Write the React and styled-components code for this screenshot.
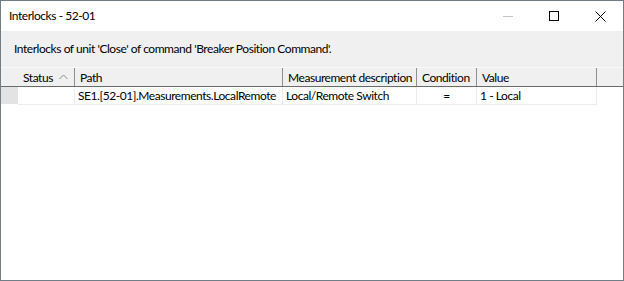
import React from "react";
import styled, { createGlobalStyle } from "styled-components";

const GlobalStyle = createGlobalStyle`
    html, body {
        margin: 0;
        padding: 0;
        background: #ffffff;
    }
    * {
        box-sizing: border-box;
    }
`

const Window = styled.div`
    width: 624px;
    height: 281px;
    border: 1px solid #6f7e87;
    background: #ffffff;
    display: flex;
    flex-direction: column;
    font-family: "Lato", "Liberation Sans", sans-serif;
    font-size: 12px;
    letter-spacing: -0.45px;
    color: #000000;
    overflow: hidden;
`
const TitleBar = styled.div`
    height: 30px;
    display: flex;
    align-items: center;
    padding-left: 8px;
`
const Title = styled.div`
    flex: 1;
    padding-bottom: 1px;
`
const CaptionButton = styled.div`
    width: 46px;
    height: 30px;
    display: flex;
    align-items: center;
    justify-content: center;
`
const Message = styled.div`
    height: 36px;
    background: #f0f0f0;
    display: flex;
    align-items: center;
    padding-left: 13px;
    padding-bottom: 1px;
`
const Grid = styled.div`
    flex: 1;
    display: flex;
    flex-direction: column;
`
const HeaderRow = styled.div`
    display: flex;
    height: 20px;
    background: #f0f0f0;
    border-top: 1px solid #f8f8f8;
    border-bottom: 1px solid #6b6b6b;
`
const HeaderCell = styled.div`
    width: ${p => p.$w}px;
    flex: ${p => (p.$fill ? 1 : "none")};
    display: flex;
    align-items: center;
    justify-content: space-between;
    padding: 0 6px 0 5px;
    border-right: ${p => (p.$sep ? "1px solid #8f8f8f" : "none")};
    white-space: nowrap;
`
const DataRow = styled.div`
    display: flex;
    height: 18px;
`
const RowHeader = styled.div`
    width: 17px;
    background: #e3e3e3;
    border-bottom: 1px solid #ffffff;
`
const Cell = styled.div`
    width: ${p => p.$w}px;
    display: flex;
    align-items: center;
    justify-content: ${p => (p.$center ? "center" : "flex-start")};
    padding-left: ${p => (p.$center ? 0 : 3)}px;
    border-right: 1px solid #ececec;
    border-bottom: 1px solid #ececec;
    white-space: nowrap;
    overflow: hidden;
`

const columns = [
    { key: "status", label: "Status", w: 57, sort: true },
    { key: "path", label: "Path", w: 208 },
    { key: "desc", label: "Measurement description", w: 134 },
    { key: "cond", label: "Condition", w: 60 },
    { key: "value", label: "Value", w: 120 },
];

const rows = [
    { status: "", path: "SE1.[52-01].Measurements.LocalRemote", desc: "Local/Remote Switch", cond: "=", value: "1 - Local" },
];

function SortArrow() {
    return (
        <svg width="9" height="6" viewBox="0 0 9 6">
            <path d="M0.5 5 L4.5 1 L8.5 5" fill="none" stroke="#8a8a8a" strokeWidth="1" />
        </svg>
    );
}

export default function App() {
    return (
        <>
            <GlobalStyle />
            <Window>
                <TitleBar>
                    <Title>Interlocks - 52-01</Title>
                    <CaptionButton>
                        <svg width="10" height="10" viewBox="0 0 10 10">
                            <line x1="0" y1="5.5" x2="10" y2="5.5" stroke="#c4c4c4" strokeWidth="1" />
                        </svg>
                    </CaptionButton>
                    <CaptionButton>
                        <svg width="10" height="10" viewBox="0 0 10 10">
                            <rect x="0.5" y="0.5" width="9" height="9" fill="none" stroke="#000" strokeWidth="1" />
                        </svg>
                    </CaptionButton>
                    <CaptionButton>
                        <svg width="11" height="11" viewBox="0 0 11 11">
                            <path d="M0.5 0.5 L10.5 10.5 M10.5 0.5 L0.5 10.5" stroke="#000" strokeWidth="1" />
                        </svg>
                    </CaptionButton>
                </TitleBar>
                <Message>Interlocks of unit 'Close' of command 'Breaker Position Command'.</Message>
                <Grid>
                    <HeaderRow>
                        <HeaderCell $w={17} />
                        {columns.map(c => (
                            <HeaderCell key={c.key} $w={c.w} $sep>
                                {c.label}
                                {c.sort && <SortArrow />}
                            </HeaderCell>
                        ))}
                        <HeaderCell $fill />
                    </HeaderRow>
                    {rows.map((r, i) => (
                        <DataRow key={i}>
                            <RowHeader />
                            {columns.map(c => (
                                <Cell key={c.key} $w={c.w} $center={c.key === "cond"}>{r[c.key]}</Cell>
                            ))}
                        </DataRow>
                    ))}
                </Grid>
            </Window>
        </>
    );
}
